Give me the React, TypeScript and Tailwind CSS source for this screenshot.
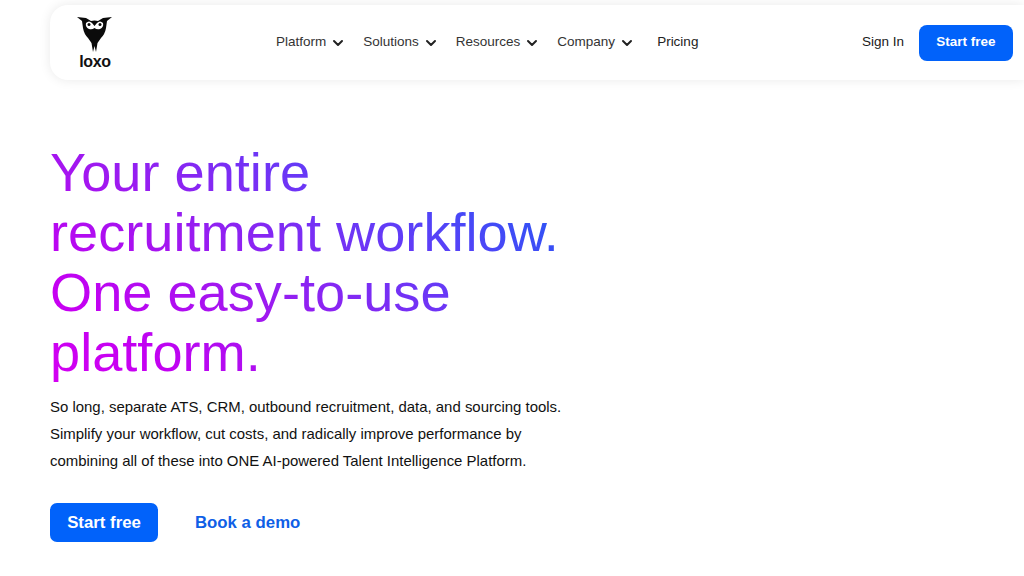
import React from 'react'
import { ChevronDown } from 'lucide-react'

const navItems = ['Platform', 'Solutions', 'Resources', 'Company']

function Logo() {
  return (
    <div className="flex flex-col items-center w-[36px]">
      <svg width="36" height="38" viewBox="0 0 36 38">
        <path
          fill="#0b0b0b"
          d="M0 2 L9 3 L14 6 Q17.500 5 21 6 L26 3 L35 2 L30 6 L29 13 Q28 19 24 23 L20.500 28 L19 37 L17.500 31 L16 37 L14.500 28 L11 23 Q7 19 6 13 L5 6 Z"
        />
        <path
          fill="#fff"
          d="M9 8 Q12 5 15 8 L17.500 11 L20 8 Q23 5 26 8 Q27 12 23 14 Q20 15 17.500 13 Q15 15 12 14 Q8 12 9 8 Z"
        />
        <circle cx="12" cy="9.500" r="1.500" fill="#0b0b0b" />
        <circle cx="23" cy="9.500" r="1.500" fill="#0b0b0b" />
      </svg>
      <span className="mt-[1px] font-['Liberation_Sans',sans-serif] font-bold text-[16px] leading-[16px] text-[#111] tracking-[-0.3px]">loxo</span>
    </div>
  )
}

export default function App() {
  return (
    <div className="w-[1024px] h-[576px] overflow-hidden bg-white font-['Liberation_Sans',Arial,sans-serif]">
      <div className="pl-[50px] pt-[5px]">
        <header className="h-[75px] flex items-center rounded-l-[18px] bg-white shadow-[0_0_12px_rgba(0,0,0,0.09)] pl-[27px] pr-[11px]">
          <Logo />
          <nav className="flex items-center ml-[163px] text-[13.5px] text-[#333]">
            {navItems.map((item) => (
              <a key={item} className="flex items-center gap-[4px] mr-[17px]">
                {item}
                <ChevronDown className="w-[16px] h-[16px] text-[#222]" strokeWidth={3} />
              </a>
            ))}
            <a className="ml-[5px] text-[#222]">Pricing</a>
          </nav>
          <a className="ml-auto text-[13.5px] text-[#1a1a1a]">Sign In</a>
          <button className="ml-[15px] w-[94px] h-[36px] rounded-[8px] bg-[#0162fa] text-white text-[13.5px] font-bold">
            Start free
          </button>
        </header>
      </div>

      <main className="pl-[50px] pt-[62px]">
        <h1 className="w-[560px] -ml-[1px] pl-[1px] text-[54.2px] leading-[60px] text-transparent bg-clip-text bg-[linear-gradient(40deg,#d400f2_0%,#c400f2_15%,#a018f0_35%,#5a40f8_65%,#2a55f5_84%,#1a60f5_100%)]">
          Your entire
          <br />
          recruitment workflow.
          <br />
          One easy-to-use
          <br />
          platform.
        </h1>
        <p className="mt-[11px] w-[540px] text-[14.95px] leading-[27px] text-[#111]">
          So long, separate ATS, CRM, outbound recruitment, data, and sourcing tools.
          <br />
          Simplify your workflow, cut costs, and radically improve performance by
          <br />
          combining all of these into ONE AI-powered Talent Intelligence Platform.
        </p>
        <div className="mt-[29px] flex items-center gap-[37px]">
          <button className="w-[108px] h-[39px] rounded-[7px] bg-[#0162fa] text-white text-[16.8px] font-bold">
            Start free
          </button>
          <a className="text-[16.8px] font-bold text-[#0f5fe6]">Book a demo</a>
        </div>
      </main>
    </div>
  )
}
